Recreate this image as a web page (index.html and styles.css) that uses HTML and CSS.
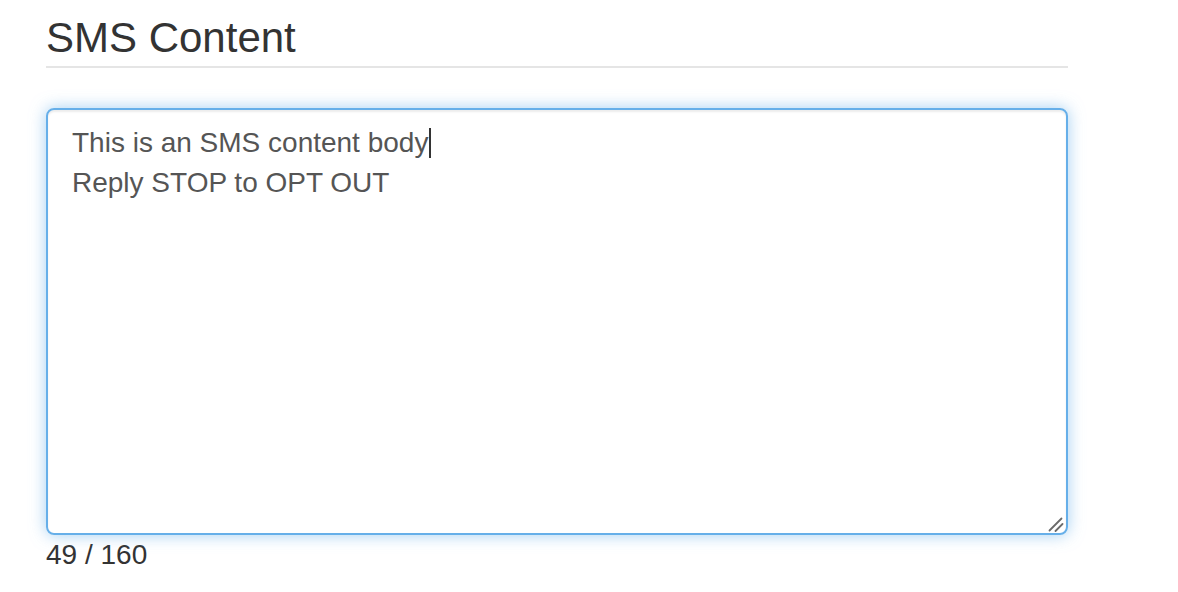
FILE: index.html
```html
<!DOCTYPE html>
<html>
<head>
<meta charset="utf-8">
<link rel="stylesheet" href="styles.css">
</head>
<body>
<div class="wrap">
  <div class="legend">SMS Content</div>
  <div class="textarea">
    <div class="line">This is an SMS content body<span class="caret"></span></div>
    <div class="line">Reply STOP to OPT OUT</div>
    <svg class="grip" width="16" height="16" viewBox="0 0 16 16">
      <line x1="1.5" y1="14.5" x2="13.5" y2="2.5" stroke="#6b6b6b" stroke-width="1.8" stroke-linecap="round"/>
      <line x1="7.5" y1="15" x2="14.5" y2="8" stroke="#6b6b6b" stroke-width="1.8" stroke-linecap="round"/>
    </svg>
  </div>
  <div class="counter">49 / 160</div>
</div>
</body>
</html>
```
FILE: styles.css
```css
html, body {
  margin: 0;
  padding: 0;
  background: #fff;
}
body {
  font-family: "Liberation Sans", Arial, Helvetica, sans-serif;
  color: #333;
}
.wrap {
  width: 1022px;
  margin-left: 46px;
  padding-top: 6px;
}
.legend {
  font-size: 42px;
  line-height: 56px;
  padding-top: 4px;
  color: #333;
  border-bottom: 2px solid #e5e5e5;
  margin-bottom: 40px;
}
.textarea {
  position: relative;
  box-sizing: border-box;
  height: 427px;
  border: 2px solid #66afe9;
  border-radius: 8px;
  padding: 13px 24px 11px;
  font-size: 28px;
  line-height: 40px;
  color: #555;
  box-shadow: inset 0 2px 2px rgba(0,0,0,.075), 0 0 16px rgba(102,175,233,.6);
}
.caret {
  display: inline-block;
  width: 2px;
  height: 30px;
  background: #333;
  vertical-align: -6px;
  margin-left: 1px;
}
.grip {
  position: absolute;
  right: 2px;
  bottom: 1px;
}
.counter {
  font-size: 28px;
  line-height: 40px;
  color: #333;
}
```
